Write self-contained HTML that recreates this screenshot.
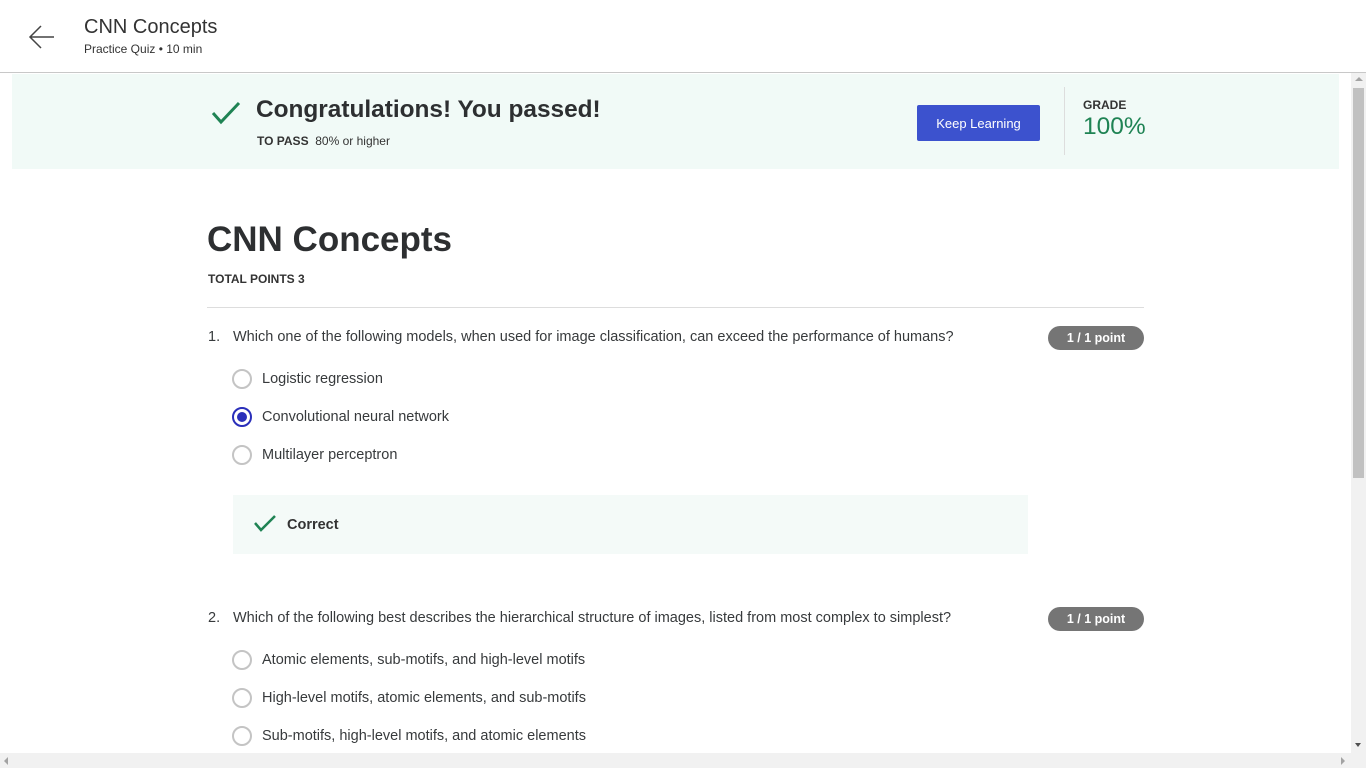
<!DOCTYPE html>
<html><head><meta charset="utf-8"><style>
*{margin:0;padding:0;box-sizing:border-box}
body{width:1366px;height:768px;overflow:hidden;background:#fff;font-family:"Liberation Sans",sans-serif;color:#373a3c;position:relative}
.a{position:absolute;white-space:nowrap}
.radio{position:absolute;width:20px;height:20px;border:2px solid #c4c4c4;border-radius:50%;left:232px}
.opt{position:absolute;left:262px;font-size:14.5px;color:#373a3c}
.pill{position:absolute;left:1048px;width:96px;height:24px;border-radius:12px;background:#757575;color:#fff;font-size:12.5px;font-weight:bold;text-align:center;line-height:24px}
.q{position:absolute;left:208px;font-size:14.5px}
.q span{position:absolute;left:25px}
</style></head><body>
<div class="a" style="left:0;top:0;width:1366px;height:73px;border-bottom:1px solid #c8c8c8;background:#fff"></div>
<svg class="a" style="left:28px;top:24px" width="28" height="26" viewBox="0 0 28 26"><path d="M26 13H3M13 2L2 13l11 11" fill="none" stroke="#444" stroke-width="1.5"/></svg>
<div class="a" style="left:84px;top:16px;font-size:20px;color:#333">CNN Concepts</div>
<div class="a" style="left:84px;top:42px;font-size:12px;color:#333">Practice Quiz • 10 min</div>

<div class="a" style="left:12px;top:74px;width:1327px;height:95px;background:#f1faf7"></div>
<svg class="a" style="left:211px;top:100px" width="30" height="26" viewBox="0 0 30 26"><path d="M2 13l8 9L28 3" fill="none" stroke="#1f8354" stroke-width="3"/></svg>
<div class="a" style="left:256px;top:96px;font-size:24.4px;font-weight:bold;color:#2d2f31">Congratulations! You passed!</div>
<div class="a" style="left:257px;top:134px;font-size:12px;color:#333"><b>TO PASS</b>&nbsp; 80% or higher</div>
<div class="a" style="left:917px;top:105px;width:123px;height:36px;background:#3c52ce;border-radius:2px;color:#fff;font-size:13px;text-align:center;line-height:37px">Keep Learning</div>
<div class="a" style="left:1064px;top:87px;width:1px;height:68px;background:#ddd"></div>
<div class="a" style="left:1083px;top:98px;font-size:12px;font-weight:bold;color:#333">GRADE</div>
<div class="a" style="left:1083px;top:113px;font-size:24.5px;color:#1f8354">100%</div>

<div class="a" style="left:207px;top:220px;font-size:35px;font-weight:bold;color:#2d2f31">CNN Concepts</div>
<div class="a" style="left:208px;top:272px;font-size:12px;font-weight:bold;color:#333">TOTAL POINTS 3</div>
<div class="a" style="left:207px;top:307px;width:937px;height:1px;background:#ddd"></div>

<div class="q a" style="top:329px">1.<span>Which one of the following models, when used for image classification, can exceed the performance of humans?</span></div>
<div class="pill" style="top:326px">1 / 1 point</div>
<div class="radio" style="top:369px"></div><div class="opt a" style="top:371px">Logistic regression</div>
<div class="radio" style="top:407px;border-color:#2a2fba"><div style="position:absolute;left:3px;top:3px;width:10px;height:10px;border-radius:50%;background:#2a2fba"></div></div><div class="opt a" style="top:409px">Convolutional neural network</div>
<div class="radio" style="top:445px"></div><div class="opt a" style="top:447px">Multilayer perceptron</div>
<div class="a" style="left:233px;top:495px;width:795px;height:59px;background:#f4faf8"></div>
<svg class="a" style="left:254px;top:514px" width="22" height="18" viewBox="0 0 22 18"><path d="M1 9l6 7L21 2" fill="none" stroke="#1f8354" stroke-width="2.5"/></svg>
<div class="a" style="left:287px;top:517px;font-size:14.5px;font-weight:bold;color:#333">Correct</div>

<div class="q a" style="top:610px">2.<span>Which of the following best describes the hierarchical structure of images, listed from most complex to simplest?</span></div>
<div class="pill" style="top:607px">1 / 1 point</div>
<div class="radio" style="top:650px"></div><div class="opt a" style="top:652px">Atomic elements, sub-motifs, and high-level motifs</div>
<div class="radio" style="top:688px"></div><div class="opt a" style="top:690px">High-level motifs, atomic elements, and sub-motifs</div>
<div class="radio" style="top:726px"></div><div class="opt a" style="top:728px">Sub-motifs, high-level motifs, and atomic elements</div>

<div class="a" style="left:1351px;top:73px;width:15px;height:680px;background:#f1f1f1"></div>
<div class="a" style="left:1353px;top:88px;width:11px;height:390px;background:#c1c1c1"></div>
<div class="a" style="left:1355px;top:77px;width:0;height:0;border-left:4px solid transparent;border-right:4px solid transparent;border-bottom:4px solid #a3a3a3"></div>
<div class="a" style="left:1355px;top:743px;width:0;height:0;border-left:3px solid transparent;border-right:3px solid transparent;border-top:4px solid #505050"></div>
<div class="a" style="left:0;top:753px;width:1366px;height:15px;background:#f1f1f1"></div>
<div class="a" style="left:4px;top:757px;width:0;height:0;border-top:4px solid transparent;border-bottom:4px solid transparent;border-right:4px solid #a3a3a3"></div>
<div class="a" style="left:1341px;top:757px;width:0;height:0;border-top:4px solid transparent;border-bottom:4px solid transparent;border-left:4px solid #a3a3a3"></div>
</body></html>
